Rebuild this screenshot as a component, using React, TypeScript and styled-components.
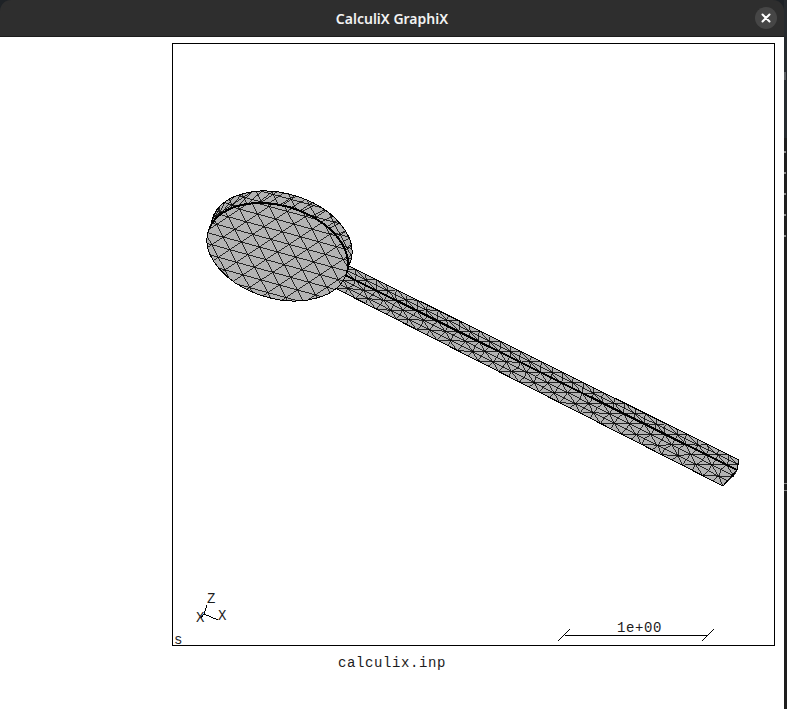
import React from 'react';
import styled, { createGlobalStyle } from 'styled-components';

const GlobalStyle = createGlobalStyle`
  html, body {
    margin: 0;
    padding: 0;
    background: #1e1e1e;
  }
`;

const Desktop = styled.div`
  width: 787px;
  height: 709px;
  display: flex;
  overflow: hidden;
  background: #1e2226;
`;

const Window = styled.div`
  width: 784px;
  height: 709px;
  flex: none;
  display: flex;
  flex-direction: column;
`;

// sliver of whatever lies behind the window, with the bits of its text that show
const BehindStrip = styled.div`
  flex: 1;
  background:
    linear-gradient(#8a8a8a, #8a8a8a) 0 151px / 2px 2px no-repeat,
    linear-gradient(#8a8a8a, #8a8a8a) 0 172px / 2px 2px no-repeat,
    linear-gradient(#8a8a8a, #8a8a8a) 0 193px / 2px 2px no-repeat,
    linear-gradient(#8a8a8a, #8a8a8a) 0 214px / 2px 2px no-repeat,
    linear-gradient(#8a8a8a, #8a8a8a) 0 235px / 2px 2px no-repeat,
    linear-gradient(#8a8a8a, #8a8a8a) 0 483px / 3px 1px no-repeat,
    linear-gradient(#8a8a8a, #8a8a8a) 0 490px / 3px 1px no-repeat,
    linear-gradient(#5a5e62, #5a5e62) 0 72px / 2px 8px no-repeat,
    linear-gradient(#262a2e 0, #262a2e 138px, #1e1e1e 138px);
`;

const TitleBar = styled.header`
  height: 37px;
  flex: none;
  box-sizing: border-box;
  display: flex;
  align-items: center;
  justify-content: center;
  position: relative;
  background: #2e2e2e;
  border-bottom: 1px solid #1c1c1c;
  border-radius: 11px 11px 0 0;
  color: #f2f2f2;
  font: 600 14px "Noto Sans", sans-serif;
`;

const CloseButton = styled.button`
  position: absolute;
  right: 7px;
  top: 7px;
  width: 22px;
  height: 22px;
  padding: 0;
  border: 0;
  border-radius: 50%;
  display: flex;
  align-items: center;
  justify-content: center;
  background: #464646;
`;

const Client = styled.main`
  flex: 1;
  display: flex;
  flex-direction: column;
  box-sizing: border-box;
  padding-top: 6px;
  background: #ffffff;
`;

const Viewport = styled.div`
  width: 603px;
  height: 603px;
  margin-left: 172px;
  box-sizing: border-box;
  border: 1px solid #000000;
`;

const Scene = styled.svg`
  display: block;
  width: 601px;
  height: 601px;
  overflow: visible;
`;

const SceneText = styled.text`
  font-family: "Liberation Mono", monospace;
  font-size: 14px;
  letter-spacing: 0.6px;
  fill: #1c1c1c;
`;

const Caption = styled.div`
  margin-top: 9px;
  text-align: center;
  font-family: "Liberation Mono", monospace;
  font-size: 14px;
  line-height: 16px;
  letter-spacing: 0.6px;
  color: #1c1c1c;
`;

type Pt = [number, number];

const GREY = '#b3b3b3';
const phi = (16.7 * Math.PI) / 180;
const A = 72.3;
const B = 46.3;
const FRONT: Pt = [277.5, 252];
const BACK: Pt = [281.5, 240];

const onDisk = (c: Pt, u: number, v: number): Pt => [
  c[0] + A * u * Math.cos(phi) - B * v * Math.sin(phi),
  c[1] + A * u * Math.sin(phi) + B * v * Math.cos(phi),
];

const seg = (p: Pt, q: Pt) =>
  `M${p[0].toFixed(1)} ${p[1].toFixed(1)}L${q[0].toFixed(1)} ${q[1].toFixed(1)}`;

const mix = (p: Pt, q: Pt, t: number): Pt => [p[0] + (q[0] - p[0]) * t, p[1] + (q[1] - p[1]) * t];

// triangular lattice on a flat face, as chords of the unit disk
const latticeLines = (c: Pt, step: number) => {
  const rot = (28 * Math.PI) / 180;
  let d = '';
  for (let f = 0; f < 3; f++) {
    const ang = rot + (f * Math.PI) / 3;
    const nx = Math.cos(ang);
    const ny = Math.sin(ang);
    for (let k = -6; k <= 6; k++) {
      const off = k * step;
      if (Math.abs(off) >= 1) continue;
      const half = Math.sqrt(1 - off * off);
      const p = onDisk(c, nx * off - ny * half, ny * off + nx * half);
      const q = onDisk(c, nx * off + ny * half, ny * off - nx * half);
      d += seg(p, q);
    }
  }
  return d;
};

// short ties across the rim
const rimLines = () => {
  let d = '';
  const n = 40;
  for (let i = 0; i < n; i++) {
    const t = (i / n) * Math.PI * 2;
    const t2 = ((i + 1) / n) * Math.PI * 2;
    d += seg(onDisk(FRONT, Math.cos(t), Math.sin(t)), onDisk(BACK, Math.cos(t2), Math.sin(t2)));
  }
  return d;
};

// the hard edge where the face meets the rim, over the top of the disk
const rimEdge = () => {
  let d = '';
  const n = 48;
  for (let i = 0; i < n; i++) {
    const t = ((185 + (175 * i) / n) * Math.PI) / 180;
    const t2 = ((185 + (175 * (i + 1)) / n) * Math.PI) / 180;
    d += seg(onDisk(FRONT, Math.cos(t), Math.sin(t)), onDisk(FRONT, Math.cos(t2), Math.sin(t2)));
  }
  return d;
};

// slightly uneven grid of triangles between two long edges
const bandLines = (a0: Pt, a1: Pt, b0: Pt, b1: Pt, rows: number, cols: number, seed: number) => {
  const vertex = (r: number, c: number): Pt => {
    const base = mix(mix(a0, a1, c / cols), mix(b0, b1, c / cols), r / rows);
    if (r === 0 || r === rows) return base;
    const h = Math.sin(r * 12.9898 + c * 78.233 + seed) * 43758.5453;
    const j = h - Math.floor(h) - 0.5;
    return [base[0] + j * 4, base[1] + j * 2];
  };
  let d = '';
  for (let r = 0; r <= rows; r++) {
    for (let c = 0; c <= cols; c++) {
      if (r > 0 && r < rows && c < cols) d += seg(vertex(r, c), vertex(r, c + 1));
      if (r < rows) d += seg(vertex(r, c), vertex(r + 1, c));
      if (r < rows && c < cols) {
        d += (r + c) % 2
          ? seg(vertex(r, c), vertex(r + 1, c + 1))
          : seg(vertex(r, c + 1), vertex(r + 1, c));
      }
    }
  }
  return d;
};

const TOP_A: Pt = [345, 264];
const TOP_B: Pt = [739, 460];
const RIDGE_A: Pt = [345, 275];
const RIDGE_B: Pt = [737, 470];
const BOT_A: Pt = [335, 288];
const BOT_B: Pt = [723, 486];

const HANDLE_MESH =
  bandLines(TOP_A, TOP_B, RIDGE_A, RIDGE_B, 2, 38, 1) + bandLines(RIDGE_A, RIDGE_B, BOT_A, BOT_B, 3, 38, 5);
const RIM_MESH = rimLines();
const RIM_EDGE = rimEdge();
const BACK_MESH = latticeLines(BACK, 0.225);
const FACE_MESH = latticeLines(FRONT, 0.225);

const points = (...p: Pt[]) => p.map((v) => v.join(',')).join(' ');

const App: React.FC = () => (
  <Desktop>
    <GlobalStyle />
    <Window>
      <TitleBar>
        CalculiX GraphiX
        <CloseButton aria-label="Close">
          <svg width="10" height="10" viewBox="0 0 10 10">
            <path d="M1.5 1.5L8.5 8.5M8.5 1.5L1.5 8.5" stroke="#fff" strokeWidth="2" strokeLinecap="round" />
          </svg>
        </CloseButton>
      </TitleBar>
      <Client>
        <Viewport>
          <Scene viewBox="173 44 601 601" shapeRendering="crispEdges">
            {/* handle */}
            <polygon points={points(TOP_A, TOP_B, RIDGE_B, BOT_B, BOT_A)} fill={GREY} stroke="#000" />
            <path d={HANDLE_MESH} stroke="#000" strokeWidth="0.8" fill="none" />
            <path d={seg(RIDGE_A, RIDGE_B)} stroke="#000" strokeWidth="2" fill="none" />

            {/* disk: rim behind, flat face in front */}
            <ellipse
              cx={BACK[0]}
              cy={BACK[1]}
              rx={A}
              ry={B}
              transform={`rotate(16.7 ${BACK[0]} ${BACK[1]})`}
              fill={GREY}
              stroke="#000"
            />
            <path d={BACK_MESH + RIM_MESH} stroke="#000" strokeWidth="0.8" fill="none" />
            <ellipse
              cx={FRONT[0]}
              cy={FRONT[1]}
              rx={A}
              ry={B}
              transform={`rotate(16.7 ${FRONT[0]} ${FRONT[1]})`}
              fill={GREY}
              stroke="#000"
            />
            <path d={FACE_MESH} stroke="#000" strokeWidth="0.8" fill="none" />
            <path d={RIM_EDGE} stroke="#000" strokeWidth="2" fill="none" />

            {/* axis triad */}
            <path d="M204 614L207 605M204 614L218 620M204 614L201 618" stroke="#000" fill="none" />
            <SceneText x="207" y="603">Z</SceneText>
            <SceneText x="218" y="620">X</SceneText>
            <SceneText x="196" y="622">X</SceneText>

            {/* scale bar */}
            <path d="M565 635H708M558 641L570 629M702 641L714 629" stroke="#000" fill="none" />
            <SceneText x="617" y="632">1e+00</SceneText>

            <SceneText x="174" y="644">s</SceneText>
          </Scene>
        </Viewport>
        <Caption>calculix.inp</Caption>
      </Client>
    </Window>
    <BehindStrip />
  </Desktop>
);

export default App;
